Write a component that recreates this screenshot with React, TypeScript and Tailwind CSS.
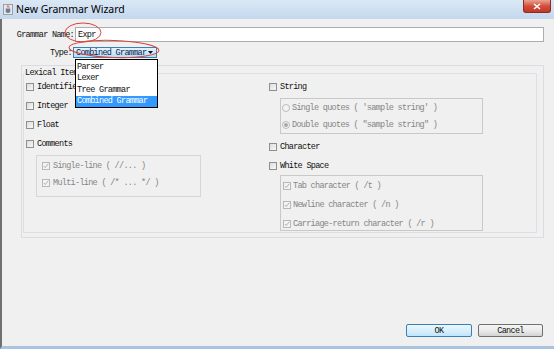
import React from "react";

function Box({ checked = false, disabled = false }: { checked?: boolean; disabled?: boolean }) {
  return (
    <span
      className={
        "relative inline-block w-[8px] h-[8px] shrink-0 border " +
        (disabled
          ? "border-[#b8b8b8] bg-[#f3f3f3]"
          : "border-[#8e8f8f] bg-gradient-to-br from-[#dcdcdc] to-[#f8f8f8]")
      }
    >
      {checked && (
        <svg viewBox="0 0 8 8" className="absolute left-0 top-0 w-[6px] h-[6px]">
          <path d="M1 4 L3 6 L7 1" fill="none" stroke="#9a9a9a" strokeWidth="1" />
        </svg>
      )}
    </span>
  );
}

function Radio({ selected = false }: { selected?: boolean }) {
  return (
    <span className="relative inline-flex items-center justify-center w-[8px] h-[8px] shrink-0 rounded-full border border-[#bcbcbc] bg-[#f4f4f4]">
      {selected && <span className="w-[4px] h-[4px] rounded-full bg-[#a8a8a8]" />}
    </span>
  );
}

function Row({
  label,
  h = "h-[19px]",
  gap = "gap-[3px]",
  checked,
  disabled,
  radio,
  selected,
}: {
  label: string;
  h?: string;
  gap?: string;
  checked?: boolean;
  disabled?: boolean;
  radio?: boolean;
  selected?: boolean;
}) {
  return (
    <div className={"flex items-center " + h + " " + gap}>
      {radio ? <Radio selected={selected} /> : <Box checked={checked} disabled={disabled} />}
      <span className={"whitespace-pre " + (disabled ? "text-[#858585]" : "text-[#111]")}>{label}</span>
    </div>
  );
}

export default function App() {
  return (
    <div className="relative w-[554px] h-[349px] overflow-hidden bg-[#f0f0f0] flex flex-col font-['Liberation_Mono',monospace] text-[8.5px] tracking-[-0.7px] leading-[10px] text-[#111]">
      {/* Title bar */}
      <div className="h-[19px] shrink-0 flex items-start bg-gradient-to-b from-[#dbe8f5] to-[#c3d8ee]">
        <svg viewBox="0 0 11 12" className="ml-[3px] mt-[4px] w-[10px] h-[11px]">
          <rect x="0.5" y="0.5" width="10" height="11" fill="#e8e8e8" stroke="#9a9a9a" />
          <path d="M3 9 Q5.5 10.5 8 9 L8 5 L3 5 Z" fill="#6a7fa0" />
          <path d="M5 1.5 Q4 3 5.5 4 M6.5 1.5 Q5.5 3 7 4" stroke="#c0392b" fill="none" strokeWidth="0.8" />
        </svg>
        <span className="ml-[3px] mt-[3px] font-['Noto_Sans',sans-serif] text-[10.5px] leading-[12px] tracking-normal text-black">
          New Grammar Wizard
        </span>
        <div className="ml-auto mr-[3px] w-[28px] h-[13px] rounded-b-[3px] border border-t-0 border-[#8f2a1e] bg-gradient-to-b from-[#e8a394] via-[#d24e38] to-[#c0382a] flex items-center justify-center">
          <svg viewBox="0 0 8 7" className="w-[8px] h-[7px]">
            <path d="M1 1 L7 6 M7 1 L1 6" stroke="white" strokeWidth="1.6" />
          </svg>
        </div>
      </div>

      {/* Body */}
      <div className="flex-1 flex flex-col border-l-2 border-l-[#707070] border-b-[3px] border-b-[#a9c3e0]">
        <div className="flex items-center mt-[8px] h-[15px]">
          <div className="w-[73px] text-right pr-[1px]">Grammar Name:</div>
          <div className="w-[469px] h-[15px] bg-white border border-[#abadb3] flex items-center pl-[2px]">Expr</div>
        </div>
        <div className="flex items-center mt-[5px] h-[11px]">
          <div className="w-[71px] text-right pr-[1px]">Type:</div>
          <div className="w-[84px] h-[11px] border border-[#3c7fb1] bg-gradient-to-b from-[#e6f3fc] to-[#b6dcf5] flex items-center pl-[2px] pr-[3px] text-[#0c1e50]">
            <span>Combined Grammar</span>
            <svg viewBox="0 0 5 3" className="ml-auto w-[5px] h-[3px]">
              <path d="M0 0 L5 0 L2.5 3 Z" fill="#111" />
            </svg>
          </div>
        </div>

        {/* Lexical items panel */}
        <div className="mt-[7px] ml-[19px] w-[523px] h-[173px] shrink-0 border border-[#d8dde2]">
          <div className="relative mt-[7px] ml-[1px] mr-[6px] h-[160px] border border-[#dfdfdf]">
            <span className="absolute left-[1px] -top-[6px] bg-[#f0f0f0] pr-[1px] leading-[10px]">Lexical Items</span>
            <div className="flex pl-[2px] pt-[3px]">
              {/* Left column */}
              <div className="w-[243px] flex flex-col">
                <Row label="Identifier" />
                <Row label="Integer" />
                <Row label="Float" />
                <Row label="Comments" />
                <div className="mt-[2px] ml-[10px] w-[165px] h-[42px] border border-[#d6d6d6] pl-[5px] pt-[1px]">
                  <Row label="Single-line ( //... )" h="h-[17px]" checked disabled />
                  <Row label="Multi-line ( /* ... */ )" h="h-[17px]" checked disabled />
                </div>
              </div>
              {/* Right column */}
              <div className="flex flex-col">
                <Row label="String" />
                <div className="mt-[2px] ml-[11px] w-[203px] h-[36px] border border-[#c8c8c8] pl-[1px]">
                  <Row label="Single quotes ( 'sample string' )" h="h-[17px]" gap="gap-[2px]" radio disabled />
                  <Row label={'Double quotes ( "sample string" )'} h="h-[17px]" gap="gap-[2px]" radio selected disabled />
                </div>
                <div className="mt-[3px]">
                  <Row label="Character" />
                </div>
                <Row label="White Space" />
                <div className="ml-[11px] w-[203px] h-[56px] border border-[#c8c8c8] pl-[2px]">
                  <Row label="Tab character ( /t )" gap="gap-[2px]" checked disabled />
                  <Row label="Newline character ( /n )" gap="gap-[2px]" checked disabled />
                  <Row label="Carriage-return character ( /r )" gap="gap-[2px]" checked disabled />
                </div>
              </div>
            </div>
          </div>
        </div>

        <div className="flex-1" />
        <div className="flex justify-end gap-[6px] mr-[11px] mb-[9px]">
          <div className="w-[66px] h-[13px] rounded-[2px] border border-[#3c7fb1] bg-gradient-to-b from-[#eaf6fd] via-[#d9f0fc] to-[#bee6fd] flex items-center justify-center">
            OK
          </div>
          <div className="w-[65px] h-[13px] rounded-[2px] border border-[#707070] bg-gradient-to-b from-[#f4f4f4] via-[#ebebeb] to-[#d3d3d3] flex items-center justify-center">
            Cancel
          </div>
        </div>
      </div>

      {/* Dropdown list (open popup) */}
      <div className="absolute left-[75px] top-[59px] w-[83px] border border-black bg-white pt-[1px]">
        <div className="h-[11.5px] flex items-center pl-[1px]">Parser</div>
        <div className="h-[11.5px] flex items-center pl-[1px]">Lexer</div>
        <div className="h-[11.5px] flex items-center pl-[1px]">Tree Grammar</div>
        <div className="h-[11.5px] flex items-center pl-[1px] bg-[#3399ff] text-white">Combined Grammar</div>
      </div>

      {/* Red annotation ellipses */}
      <svg className="absolute left-0 top-0 w-[554px] h-[349px] pointer-events-none" viewBox="0 0 554 349">
        <ellipse cx="83" cy="32.5" rx="18" ry="9.5" fill="none" stroke="#d9443a" strokeWidth="1" />
        <ellipse cx="114" cy="49" rx="45" ry="8.5" fill="none" stroke="#d9443a" strokeWidth="1" transform="rotate(2 114 49)" />
      </svg>
    </div>
  );
}
